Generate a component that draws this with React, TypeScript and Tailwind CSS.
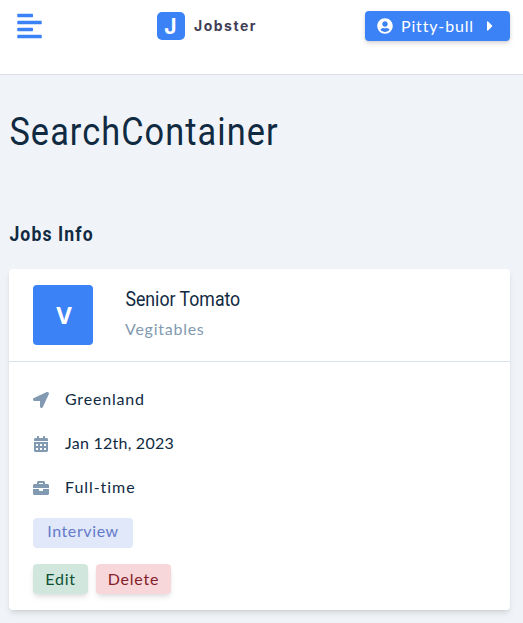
import type { ReactNode } from "react";
import {
  FaAlignLeft,
  FaBriefcase,
  FaCalendarAlt,
  FaCaretRight,
  FaLocationArrow,
  FaUserCircle,
} from "react-icons/fa";

function Logo() {
  return (
    <div className="flex items-center gap-[9px]">
      <span className="flex size-7 items-center justify-center rounded-[5px] bg-[#3b82f6] pr-px font-['Inter'] text-[21px] font-bold leading-none text-white">
        J
      </span>
      <span className="font-['Inter'] text-[14px] font-bold leading-7 tracking-[1.5px] text-[#433e56]">
        Jobster
      </span>
    </div>
  );
}

function Navbar() {
  return (
    <nav className="flex h-[75px] items-start border-b border-[#d9dde2] bg-white pl-[17px] pr-[13px] pt-[11px]">
      <FaAlignLeft className="mt-px h-7 w-[25px] text-[#3b82f6]" />
      <div className="ml-[115px] mt-px">
        <Logo />
      </div>
      <button className="ml-auto flex h-[30px] w-[145px] items-center rounded bg-[#3b82f6] pl-3 text-white shadow-[0_1px_3px_rgba(0,0,0,0.1),0_3px_5px_rgba(0,0,0,0.1)]">
        <FaUserCircle size={16} />
        <span className="ml-2 w-[78px] text-left text-[16px] tracking-[0.85px]">Pitty-bull</span>
        <FaCaretRight size={16} className="ml-[3px]" />
      </button>
    </nav>
  );
}

function InfoRow({ icon, children }: { icon: ReactNode; children: ReactNode }) {
  return (
    <div className="flex h-6 items-center text-[#102a42]">
      <span className="flex w-8 text-[16px] text-[#829ab1]">{icon}</span>
      <span className="-mt-[2px] whitespace-nowrap">{children}</span>
    </div>
  );
}

function JobCard() {
  return (
    <article className="h-[341px] rounded bg-white shadow-[0_4px_6px_-1px_rgba(0,0,0,0.1),0_2px_4px_-1px_rgba(0,0,0,0.06)]">
      <header className="flex h-[93px] border-b border-[#d9e2ec] pl-6 pt-4">
        <div className="flex size-[60px] items-center justify-center rounded bg-[#3b82f6] pb-px pl-[2px] font-['Open_Sans'] text-[24px] font-bold text-white">
          V
        </div>
        <div className="ml-8">
          <h5 className="mt-[2px] origin-left scale-x-[0.885] whitespace-nowrap pl-[0.5px] font-['Roboto'] text-[20px] leading-6 text-[#102a42]">
            Senior Tomato
          </h5>
          <p className="mt-[6px] text-[16px] leading-6 tracking-[0.75px] text-[#829ab1]">Vegitables</p>
        </div>
      </header>
      <div className="px-6 pt-[26px]">
        <div className="flex flex-col gap-5">
          <InfoRow icon={<FaLocationArrow />}>
            <span className="text-[16px] tracking-[0.8px]">Greenland</span>
          </InfoRow>
          <InfoRow icon={<FaCalendarAlt />}>
            <span className="text-[16px] tracking-[0.25px]">Jan 12th, 2023</span>
          </InfoRow>
          <InfoRow icon={<FaBriefcase />}>
            <span className="text-[16px] tracking-[0.95px]">Full-time</span>
          </InfoRow>
        </div>
        <div className="mt-[18px] flex h-[30px] w-[100px] items-center justify-center rounded bg-[#e0e8f9] pb-[4px] text-[16px] tracking-[0.6px] text-[#647acb]">
          Interview
        </div>
        <div className="mt-4 flex gap-2">
          <button className="h-[30px] w-[55px] rounded bg-[#d1e7dd] text-[16px] tracking-[0.8px] text-[#0f5132] shadow-[0_4px_6px_-1px_rgba(0,0,0,0.1),0_2px_4px_-1px_rgba(0,0,0,0.06)]">
            Edit
          </button>
          <button className="h-[30px] w-[75px] rounded bg-[#f8d7da] text-[16px] tracking-[0.8px] text-[#842029] shadow-[0_4px_6px_-1px_rgba(0,0,0,0.1),0_2px_4px_-1px_rgba(0,0,0,0.06)]">
            Delete
          </button>
        </div>
      </div>
    </article>
  );
}

export default function App() {
  return (
    <div className="h-[623px] overflow-hidden bg-[#f0f4f8] font-['Lato',sans-serif]">
      <Navbar />
      <main className="pl-[9px] pr-[13px] pt-[33px]">
        <h2 className="origin-left scale-x-[0.88] whitespace-nowrap pl-[0.5px] font-['Roboto'] text-[39px] leading-[49px] tracking-[1.2px] text-[#102a42]">
          SearchContainer
        </h2>
        <h5 className="mt-[65px] origin-left scale-x-[0.88] whitespace-nowrap pl-[0.5px] font-['Roboto'] text-[20px] font-bold leading-6 tracking-[1.25px] text-[#102a42]">
          Jobs Info
        </h5>
        <div className="mt-[23px]">
          <JobCard />
        </div>
      </main>
    </div>
  );
}
